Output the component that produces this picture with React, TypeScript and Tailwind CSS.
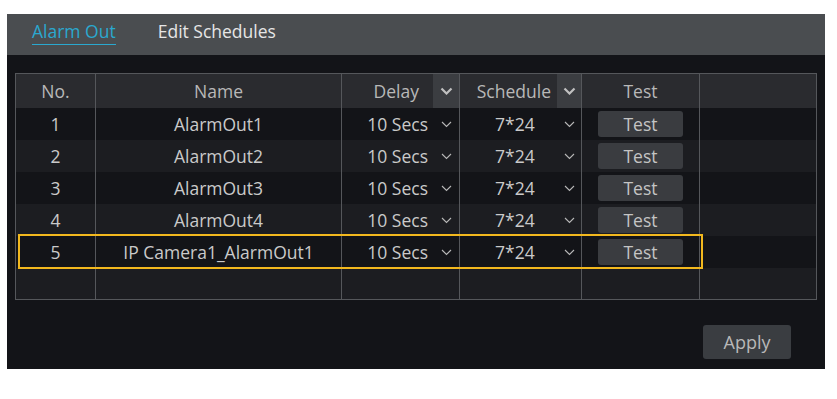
import React from "react";

const rows = [
  { no: "1", name: "AlarmOut1" },
  { no: "2", name: "AlarmOut2" },
  { no: "3", name: "AlarmOut3" },
  { no: "4", name: "AlarmOut4" },
  { no: "5", name: "IP Camera1_AlarmOut1" },
];

const cols = "grid grid-cols-[80px_246px_118px_122px_118px_118px]";

function ThinChevron() {
  return (
    <svg width="11" height="7" viewBox="0 0 11 7" fill="none">
      <path d="M1 1l4.5 4.5L10 1" stroke="#b8b8b8" strokeWidth="1.1" />
    </svg>
  );
}

function BoldChevron() {
  return (
    <svg width="13" height="8" viewBox="0 0 13 8" fill="none">
      <path d="M1.5 1.5l5 5 5-5" stroke="#c0c0c0" strokeWidth="2.2" />
    </svg>
  );
}

export default function App() {
  return (
    <div className="w-[837px] h-[399px] bg-white pt-[14px] pl-[7px] font-['Open_Sans',sans-serif]">
      <div className="w-[818px] h-[355px] flex flex-col bg-[#131418]">
        <div className="h-[41px] bg-[#4a4d50] flex items-start pl-[25px] gap-[42px] text-[17.5px]">
          <div className="pt-[4px] text-[#2aa8cf] border-b-[1.5px] border-[#2aa8cf] leading-[26px]">
            Alarm Out
          </div>
          <div className="pt-[4px] text-[#e6e6e6] leading-[26px]">Edit Schedules</div>
        </div>
        <div className="flex-1 flex flex-col px-[8px] pt-[18px]">
          <div className="border border-[#55575b] text-[17.5px] text-[#cacaca]">
            <div className={`${cols} h-[34px] bg-[#2a2b2f] text-[#b8b8b8]`}>
              <div className="flex items-center justify-center border-r border-[#55575b]">No.</div>
              <div className="flex items-center justify-center border-r border-[#55575b]">Name</div>
              <div className="flex items-stretch border-r border-[#55575b]">
                <div className="flex-1 flex items-center justify-end pr-[14px]">Delay</div>
                <div className="w-[26px] bg-[#3b3d41] flex items-center justify-center">
                  <BoldChevron />
                </div>
              </div>
              <div className="flex items-stretch border-r border-[#55575b]">
                <div className="flex-1 flex items-center justify-end pr-[6px]">Schedule</div>
                <div className="w-[24px] bg-[#3b3d41] flex items-center justify-center">
                  <BoldChevron />
                </div>
              </div>
              <div className="flex items-center justify-center border-r border-[#55575b]">Test</div>
              <div></div>
            </div>
            {rows.map((r, i) => (
              <div
                key={r.no}
                className={`${cols} relative h-[32px] ${i % 2 === 0 ? "bg-[#131418]" : "bg-[#1c1d21]"}`}
              >
                <div className="flex items-center justify-center border-r border-[#55575b]">{r.no}</div>
                <div className="flex items-center justify-center border-r border-[#55575b]">{r.name}</div>
                <div className="flex items-center justify-end pr-[7px] gap-[13px] border-r border-[#55575b]">
                  <span>10 Secs</span>
                  <ThinChevron />
                </div>
                <div className="flex items-center border-r border-[#55575b]">
                  <span className="ml-[35px] flex-1">7*24</span>
                  <span className="mr-[6px]"><ThinChevron /></span>
                </div>
                <div className="flex items-center justify-center border-r border-[#55575b]">
                  <div className="w-[85px] h-[26px] rounded-[3px] bg-[#3a3c40] flex items-center justify-center text-[#c4c4c4]">
                    Test
                  </div>
                </div>
                <div></div>
                {i === 4 && (
                  <div className="absolute left-[2px] top-[-2px] w-[685px] h-[35px] border-2 border-[#f2b81e] pointer-events-none" />
                )}
              </div>
            ))}
            <div className={`${cols} h-[31px] bg-[#1c1d21]`}>
              <div className="border-r border-[#55575b]"></div>
              <div className="border-r border-[#55575b]"></div>
              <div className="border-r border-[#55575b]"></div>
              <div className="border-r border-[#55575b]"></div>
              <div className="border-r border-[#55575b]"></div>
              <div></div>
            </div>
          </div>
          <div className="flex justify-end pr-[26px] pt-[25px]">
            <div className="w-[88px] h-[34px] rounded-[3px] bg-[#3a3d41] flex items-center justify-center text-[18px] text-[#b8b8b8]">
              Apply
            </div>
          </div>
        </div>
      </div>
    </div>
  );
}
